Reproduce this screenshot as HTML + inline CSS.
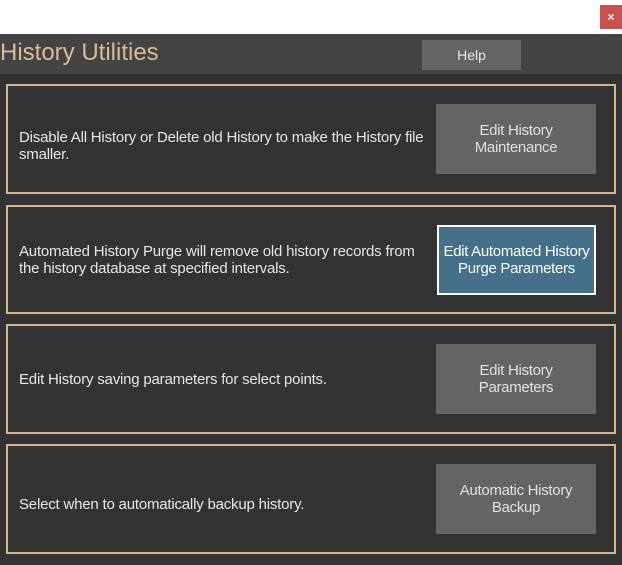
<!DOCTYPE html>
<html><head><style>
body{margin:0;width:622px;height:565px;background:#333;font-family:"Liberation Sans",sans-serif;position:relative;overflow:hidden}
.top{position:absolute;left:0;top:0;width:622px;height:34px;background:#fff}
.close{position:absolute;left:600px;top:5px;width:22px;height:24px;background:#c85150;color:#fff;font-size:12px;font-weight:bold;text-align:center;line-height:24px}
.hdr{position:absolute;left:0;top:34px;width:622px;height:40px;background:#444}
.title{position:absolute;left:0;top:39px;font-size:24px;color:#d8bc98;letter-spacing:0}
.help{position:absolute;left:422px;top:40px;width:99px;height:30px;background:#646464;color:#e6e6e6;font-size:14px;text-align:center;line-height:30px}
.panel{position:absolute;left:6px;width:606px;border:2px solid #d6b68e}
.txt{position:absolute;left:11px;color:#e6e6e6;font-size:15px;line-height:17px;letter-spacing:-0.2px;white-space:nowrap}
.btn{position:absolute;left:428px;width:160px;height:70px;background:#646464;color:#e0e0e0;font-size:15px;line-height:17px;display:flex;align-items:center;justify-content:center;text-align:center;letter-spacing:-0.3px;white-space:nowrap}
.blue{background:#44708a;border:2px solid #fff;box-sizing:border-box;color:#fff}
</style></head><body>
<div class="top"></div><div class="close">×</div>
<div class="hdr"></div><div class="title">History Utilities</div><div class="help">Help</div>

<div class="panel" style="top:84px;height:106px">
<div class="txt" style="top:43px">Disable All History or Delete old History to make the History file<br>smaller.</div>
<div class="btn" style="top:18px">Edit History<br>Maintenance</div></div>

<div class="panel" style="top:205px;height:105px">
<div class="txt" style="top:36px">Automated History Purge will remove old history records from<br>the history database at specified intervals.</div>
<div class="btn blue" style="top:18px;left:429px;width:159px;height:70px">Edit Automated History<br>Purge Parameters</div></div>

<div class="panel" style="top:324px;height:106px">
<div class="txt" style="top:45px">Edit History saving parameters for select points.</div>
<div class="btn" style="top:18px">Edit History<br>Parameters</div></div>

<div class="panel" style="top:444px;height:106px">
<div class="txt" style="top:50px">Select when to automatically backup history.</div>
<div class="btn" style="top:18px">Automatic History<br>Backup</div></div>
</body></html>
